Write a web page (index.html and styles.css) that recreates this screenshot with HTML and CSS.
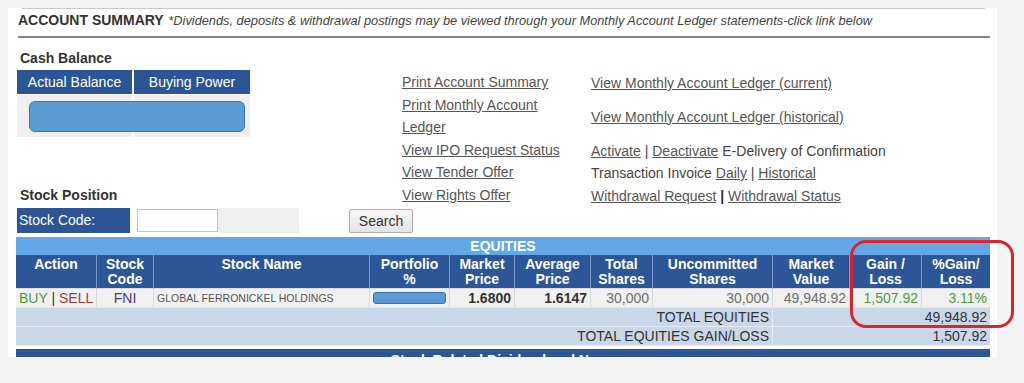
FILE: index.html
```html
<!DOCTYPE html>
<html>
<head>
<meta charset="utf-8">
<link rel="stylesheet" href="styles.css">
</head>
<body>
<div class="panel">
  <div class="top-rule"></div>
  <div class="summary-head"><b>ACCOUNT SUMMARY</b> <i>*Dividends, deposits &amp; withdrawal postings may be viewed through your Monthly Account Ledger statements-click link below</i></div>

  <div class="content">
    <div class="main-row">
      <div class="left-col">
        <div class="label">Cash Balance</div>
        <div class="cash">
          <div class="cash-h">Actual Balance</div>
          <div class="cash-h">Buying Power</div>
          <div class="cash-c"></div>
          <div class="cash-c"></div>
          <div class="redact"></div>
        </div>
        <div class="label stock-label">Stock Position</div>
      </div>
      <div class="links">
        <div class="l1"><a href="#">Print Account Summary</a></div>
        <div class="l2"><a href="#">View Monthly Account Ledger (current)</a></div>
        <div class="l1"><a href="#">Print Monthly Account Ledger</a></div>
        <div class="l2"><a href="#">View Monthly Account Ledger (historical)</a></div>
        <div class="l1"><a href="#">View IPO Request Status</a></div>
        <div class="l2"><a href="#">Activate</a> | <a href="#">Deactivate</a> E-Delivery of Confirmation</div>
        <div class="l1"><a href="#">View Tender Offer</a></div>
        <div class="l2">Transaction Invoice <a href="#">Daily</a> | <a href="#">Historical</a></div>
        <div class="l1"><a href="#">View Rights Offer</a></div>
        <div class="l2"><a href="#">Withdrawal Request</a> <span class="sep">|</span> <a href="#">Withdrawal Status</a></div>
      </div>
    </div>

    <div class="stock-row">
      <div class="sc-label">Stock Code:</div>
      <div class="sc-input"><input type="text" class="code-input"></div>
      <div class="sc-blank"></div>
      <button class="search">Search</button>
    </div>

    <table class="eq">
      <colgroup>
        <col class="w81"><col class="w57"><col class="w216"><col class="w80"><col class="w65"><col class="w76"><col class="w62"><col class="w120"><col class="w77"><col class="w72"><col class="w68">
      </colgroup>
      <tr class="eq-title"><td colspan="11">EQUITIES</td></tr>
      <tr class="eq-head">
        <th>Action</th>
        <th>Stock<br>Code</th>
        <th>Stock Name</th>
        <th>Portfolio<br>%</th>
        <th>Market<br>Price</th>
        <th>Average<br>Price</th>
        <th>Total<br>Shares</th>
        <th>Uncommitted<br>Shares</th>
        <th>Market<br>Value</th>
        <th>Gain /<br>Loss</th>
        <th>%Gain/<br>Loss</th>
      </tr>
      <tr class="eq-row">
        <td class="c"><span class="buy">BUY</span> | <span class="sell">SELL</span></td>
        <td class="c code">FNI</td>
        <td class="name">GLOBAL FERRONICKEL HOLDINGS</td>
        <td class="c"><div class="pbar"></div></td>
        <td class="r strong">1.6800</td>
        <td class="r strong">1.6147</td>
        <td class="r muted">30,000</td>
        <td class="r muted">30,000</td>
        <td class="r muted">49,948.92</td>
        <td class="r gain">1,507.92</td>
        <td class="r gain">3.11%</td>
      </tr>
      <tr class="eq-total">
        <td colspan="8" class="r">TOTAL EQUITIES</td>
        <td></td>
        <td colspan="2" class="r last">49,948.92</td>
      </tr>
      <tr class="eq-total">
        <td colspan="8" class="r">TOTAL EQUITIES GAIN/LOSS</td>
        <td></td>
        <td colspan="2" class="r last">1,507.92</td>
      </tr>
    </table>
    <div class="news">Stock Related Dividend and News</div>
  </div>
</div>
<div class="highlight"></div>
</body>
</html>
```

FILE: styles.css
```css
html, body {
  margin: 0;
  padding: 0;
}
body {
  position: relative;
  background: #f3f3f3;
  padding: 8px 0 0 8px;
  height: 383px;
  box-sizing: border-box;
  font-family: "Liberation Sans", Arial, sans-serif;
  color: #333;
  overflow: hidden;
}
.panel {
  width: 989px;
  height: 349px;
  background: #fff;
  overflow: hidden;
}
.top-rule {
  margin-left: 14px;
  width: 963px;
  height: 1px;
  background: #c3ccd6;
}
.summary-head {
  margin-left: 10px;
  width: 972px;
  padding: 3px 0 7px;
  font-size: 13px;
  line-height: 16px;
  border-bottom: 2px solid #858585;
  color: #333;
  white-space: nowrap;
}
.summary-head b {
  font-size: 14px;
}
.summary-head i {
  font-size: 12.8px;
  color: #444;
  margin-left: 1px;
}
.content {
  padding-left: 9px;
}
.main-row {
  display: flex;
  align-items: flex-start;
  margin-top: 12px;
}
.left-col {
  width: 385px;
  flex: none;
}
.label {
  font-size: 14px;
  font-weight: bold;
  line-height: 16px;
  padding-left: 3px;
  color: #333;
}
.stock-label {
  margin-top: 50px;
}
.cash {
  position: relative;
  margin-top: 4px;
  display: grid;
  grid-template-columns: 115px 116px;
  grid-template-rows: 24px 42px;
  column-gap: 2px;
  row-gap: 1px;
  width: 233px;
}
.cash-h {
  background: #2b5597;
  color: #fff;
  font-size: 14px;
  line-height: 24px;
  text-align: center;
}
.cash-c {
  background: #efefef;
}
.redact {
  position: absolute;
  left: 12px;
  top: 31px;
  width: 216px;
  height: 31px;
  background: #5a9bd6;
  border: 1px solid #3e73ab;
  border-radius: 6px;
  box-sizing: border-box;
}
.links {
  display: grid;
  grid-template-columns: 172px auto;
  column-gap: 17px;
  margin-top: 21px;
  font-size: 14px;
  line-height: 22.5px;
  color: #444;
}
.links a {
  color: #555;
  text-decoration: underline;
}
.l2 {
  align-self: center;
  padding-top: 3px;
  line-height: 19.5px;
  white-space: nowrap;
}
.sep {
  color: #333;
  font-weight: bold;
}
.stock-row {
  display: flex;
  align-items: flex-start;
  margin-top: 2px;
  height: 25px;
}
.sc-label {
  width: 113px;
  height: 25px;
  background: #2b5597;
  color: #fff;
  font-size: 14px;
  line-height: 25px;
  padding-left: 2px;
  box-sizing: border-box;
}
.sc-input {
  width: 88px;
  height: 25px;
  padding: 1px 0 0 7px;
  box-sizing: border-box;
}
.code-input {
  width: 81px;
  height: 23px;
  box-sizing: border-box;
  border: 1px solid #c4c4c4;
  margin: 0;
  padding: 0 3px;
  background: #fff;
}
.sc-blank {
  width: 81px;
  height: 25px;
  background: #efefef;
}
.search {
  margin: 1px 0 0 50px;
  width: 64px;
  height: 24px;
  font-family: "Liberation Sans", Arial, sans-serif;
  font-size: 14px;
  color: #333;
  background: linear-gradient(#f8f8f8, #e4e4e4);
  border: 1px solid #adadad;
  border-radius: 2px;
  padding: 0;
}
.eq {
  margin: 4px 0 0 -1px;
  width: 974px;
  table-layout: fixed;
  border-collapse: separate;
  border-spacing: 0;
  font-size: 14px;
}
.w81 { width: 81px; }
.w57 { width: 57px; }
.w216 { width: 216px; }
.w80 { width: 80px; }
.w65 { width: 65px; }
.w76 { width: 76px; }
.w62 { width: 62px; }
.w120 { width: 120px; }
.w77 { width: 77px; }
.w72 { width: 72px; }
.w68 { width: 68px; }
.eq td, .eq th {
  padding: 0 3px;
  box-sizing: border-box;
  white-space: nowrap;
  overflow: hidden;
}
.eq-title td {
  height: 18px;
  line-height: 18px;
  background: #62a8e6;
  color: #fff;
  font-weight: bold;
  text-align: center;
  padding: 0;
}
.eq-head th {
  height: 34px;
  background: #2c5698;
  color: #fff;
  font-weight: bold;
  line-height: 15px;
  vertical-align: top;
  padding: 2px 2px 0;
  border-right: 1px solid #7b97c4;
  border-bottom: 1px solid #dcdcdc;
}
.eq-head th:last-child,
.eq-row td:last-child {
  border-right: none;
}
.eq-row td {
  height: 19px;
  line-height: 18px;
  background: #f1f1f1;
  border-right: 1px solid #dadada;
  border-bottom: 1px solid #e6e6e6;
}
.eq-total td {
  height: 19px;
  line-height: 18px;
  background: #c9d8e9;
  color: #333;
  border-bottom: 1px solid #e4ebf3;
}
.eq-total td:first-child {
  border-right: 1px solid #e4ebf3;
}
.c { text-align: center; }
.r { text-align: right; }
.buy { color: #4a9a3c; }
.sell { color: #a83a3a; }
.code { color: #4a3a8c; }
.name {
  font-size: 10.5px;
  color: #555;
}
.strong {
  font-weight: bold;
  color: #333;
}
.muted { color: #6f6f6f; }
.gain { color: #4aa041; }
.pbar {
  height: 12px;
  background: #5a9bd6;
  border: 1px solid #3e73ab;
  border-radius: 3px;
  box-sizing: border-box;
}
.news {
  margin: 3px 0 0 -1px;
  width: 974px;
  height: 20px;
  background: #2c5698;
  color: #fff;
  font-size: 14px;
  font-weight: bold;
  text-align: center;
  line-height: 22px;
}
.highlight {
  position: absolute;
  left: 850px;
  top: 240px;
  width: 164px;
  height: 88px;
  border: 3px solid #d9252b;
  border-radius: 16px;
  box-sizing: border-box;
}
```
